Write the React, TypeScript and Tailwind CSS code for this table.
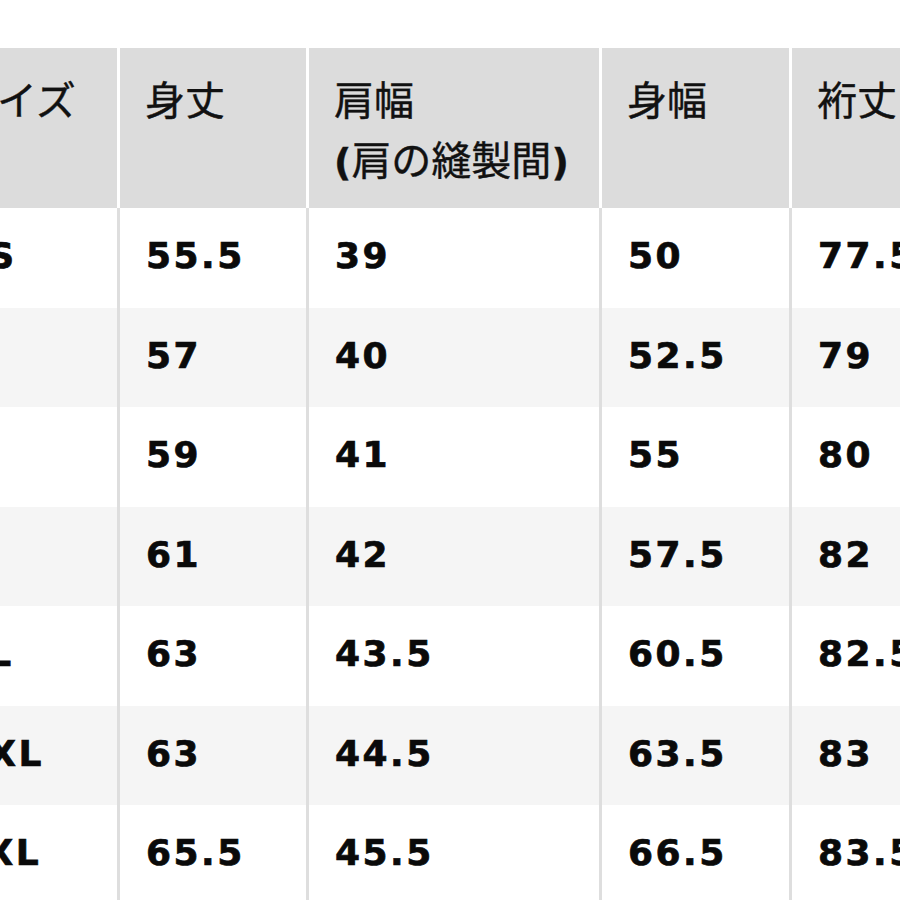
import React from "react";

const headers: string[][] = [
  ["サイズ"],
  ["身丈"],
  ["肩幅", "(肩の縫製間)"],
  ["身幅"],
  ["裄丈"],
];

const rows: string[][] = [
  ["XS", "55.5", "39", "50", "77.5"],
  ["S", "57", "40", "52.5", "79"],
  ["M", "59", "41", "55", "80"],
  ["L", "61", "42", "57.5", "82"],
  ["XL", "63", "43.5", "60.5", "82.5"],
  ["XXL", "63", "44.5", "63.5", "83"],
  ["3XL", "65.5", "45.5", "66.5", "83.5"],
];

const cjk = { fontFamily: '"Noto Sans CJK JP", "Noto Sans", sans-serif' };
const num = { fontFamily: '"DejaVu Sans", "Liberation Sans", sans-serif' };

function HeaderLine({ text }: { text: string }) {
  const parts = text.split(/([()])/).filter((p) => p.length > 0);
  return (
    <div className="h-[60px] leading-[60px] whitespace-nowrap">
      {parts.map((p, i) =>
        p === "(" || p === ")" ? (
          <span key={i} className="font-bold text-[38px]" style={num}>
            {p}
          </span>
        ) : (
          <span key={i}>{p}</span>
        )
      )}
    </div>
  );
}

export default function App() {
  return (
    <div className="w-[900px] h-[900px] overflow-hidden bg-white">
      <div className="pt-[48px] -ml-[68px] w-[1000px]">
        <div className="grid grid-cols-[185px_186px_290px_187px_200px] gap-x-[3px] bg-white">
          {headers.map((h, i) => (
            <div
              key={i}
              className="bg-[#dcdcdc] h-[160px] pl-[25px] pt-[20px] text-[40px] text-[#111] font-normal [-webkit-text-stroke:0.4px_#111]"
              style={cjk}
            >
              {h.map((line, j) => (
                <HeaderLine key={j} text={line} />
              ))}
            </div>
          ))}
        </div>
        {rows.map((r, ri) => (
          <div
            key={ri}
            className="grid grid-cols-[185px_186px_290px_187px_200px] gap-x-[3px] bg-[#dedede]"
          >
            {r.map((c, ci) => (
              <div
                key={ci}
                className={
                  (ri % 2 === 0 ? "bg-white" : "bg-[#f5f5f5]") +
                  " h-[99.5px] flex items-center pl-[26px] pb-[3px] text-[36px] font-bold tracking-[2.5px] text-[#0a0a0a] whitespace-nowrap [-webkit-text-stroke:0.7px_#0a0a0a]"
                }
                style={num}
              >
                {c}
              </div>
            ))}
          </div>
        ))}
      </div>
    </div>
  );
}
